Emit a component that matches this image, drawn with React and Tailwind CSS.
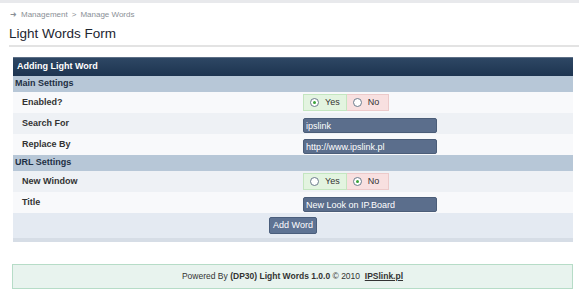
import { useState } from "react";

function YesNo({ value, onChange }) {
  return (
    <div className="flex h-[17px] text-[9px] text-[#333]">
      <label className="flex items-center gap-[6px] pl-[6px] pr-[6px] bg-[#e3f4e0] border border-[#c4e6c0] cursor-pointer">
        <Radio checked={value} onClick={() => onChange(true)} />
        Yes
      </label>
      <label className="flex items-center gap-[6px] pl-[6px] pr-[9px] bg-[#f8e0e0] border border-l-0 border-[#eccaca] cursor-pointer">
        <Radio checked={!value} onClick={() => onChange(false)} />
        No
      </label>
    </div>
  );
}

function Radio({ checked, onClick }) {
  return (
    <span
      onClick={onClick}
      className="w-[9px] h-[9px] rounded-full border border-[#6b7b8c] bg-white flex items-center justify-center"
    >
      {checked && <span className="w-[3px] h-[3px] rounded-full bg-[#3aa23a]"></span>}
    </span>
  );
}

function TextField({ value, onChange }) {
  return (
    <input
      value={value}
      onChange={(e) => onChange(e.target.value)}
      className="w-[134px] h-[15px] px-[2px] text-[9px] text-white bg-[#5b6e8c] border border-[#4b5d78] rounded-[2px] outline-none"
    />
  );
}

function Row({ label, shade, children }) {
  return (
    <div className={`flex items-center h-[21px] ${shade ? "bg-[#eef1f5]" : "bg-[#f8f9fb]"}`}>
      <div className="w-[290px] pl-[9px] text-[9px] font-bold text-[#333]">{label}</div>
      <div className="flex-1">{children}</div>
    </div>
  );
}

function Section({ title }) {
  return (
    <div className="h-[16px] flex items-center bg-[#b7c7d7] px-[2px] text-[9px] font-bold text-[#1e2f44]">
      {title}
    </div>
  );
}

export default function App() {
  const [enabled, setEnabled] = useState(true);
  const [newWindow, setNewWindow] = useState(false);
  const [search, setSearch] = useState("ipslink");
  const [replace, setReplace] = useState("http://www.ipslink.pl");
  const [title, setTitle] = useState("New Look on IP.Board");

  return (
    <div className="w-[579px] h-[300px] bg-white font-['Liberation_Sans',Arial,sans-serif] overflow-hidden">
      <div className="h-[3px] bg-[#e8e9ec]"></div>
      <div className="pl-[10px] pt-[6px] h-[18px] flex items-center gap-[4px] text-[8px] text-[#8a8f96]">
        <span>➜</span>
        <span>Management</span>
        <span>&gt;</span>
        <span>Manage Words</span>
      </div>
      <h1 className="ml-[9px] mt-[5px] pb-[3px] text-[13.5px] leading-[16px] text-[#1c2530] border-b-2 border-[#e3e3e3]">
        Light Words Form
      </h1>

      <div className="mx-[13px] mt-[10px] w-[560px] border-b-4 border-[#d6dde6]">
        <div className="h-[19px] flex items-center px-[4px] bg-gradient-to-b from-[#2e4764] to-[#1d3450] border-t border-[#5d6f86] text-[9px] font-bold text-white">
          Adding Light Word
        </div>
        <Section title="Main Settings" />
        <Row label="Enabled?">
          <YesNo value={enabled} onChange={setEnabled} />
        </Row>
        <Row label="Search For" shade>
          <TextField value={search} onChange={setSearch} />
        </Row>
        <Row label="Replace By">
          <TextField value={replace} onChange={setReplace} />
        </Row>
        <Section title="URL Settings" />
        <Row label="New Window" shade>
          <YesNo value={newWindow} onChange={setNewWindow} />
        </Row>
        <Row label="Title">
          <TextField value={title} onChange={setTitle} />
        </Row>
        <div className="h-[25px] flex items-center justify-center bg-[#e4eaf2]">
          <button className="h-[17px] px-[3px] text-[9px] text-white bg-[#5e7393] border border-[#4a5e7c] rounded-[2px]">
            Add Word
          </button>
        </div>
      </div>

      <div className="mx-[12px] mt-[22px] w-[561px] h-[25px] flex items-center justify-center bg-[#e8f3ee] border border-[#b6dcc7] text-[8.5px] text-[#333]">
        Powered By&nbsp;<b>(DP30) Light Words 1.0.0</b>&nbsp;© 2010&nbsp;&nbsp;
        <a className="font-bold underline text-[#333]">IPSlink.pl</a>
      </div>
    </div>
  );
}
